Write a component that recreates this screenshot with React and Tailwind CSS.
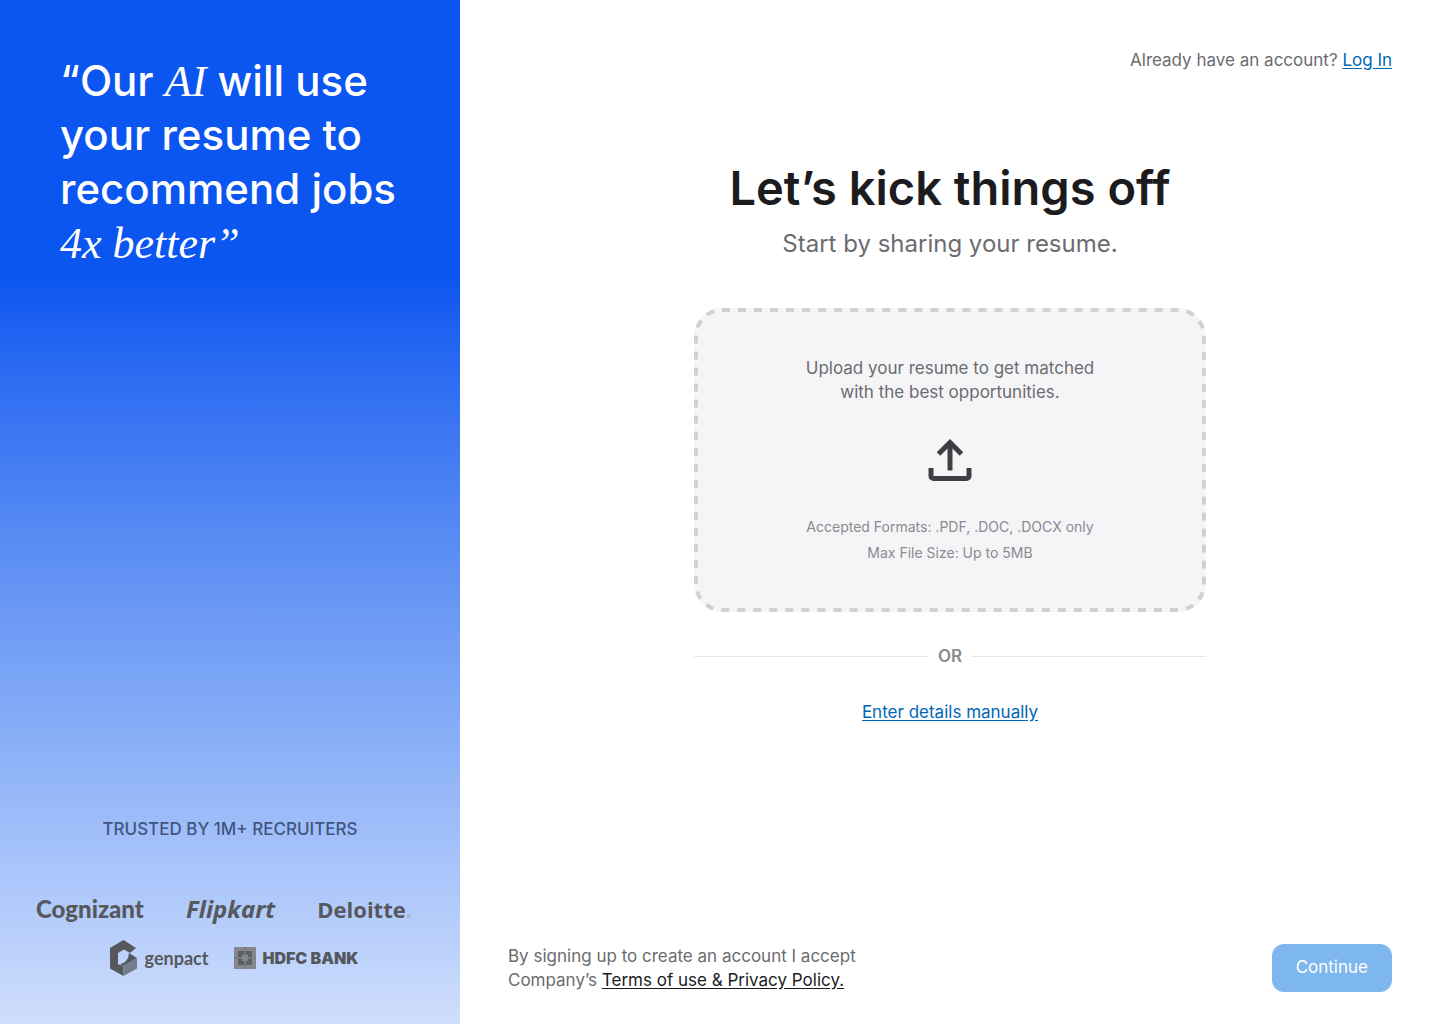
function UploadIcon() {
  return (
    <svg viewBox="0 0 44 44" className="h-11 w-11" fill="none" stroke="#3f3f43" strokeWidth="5" aria-hidden="true">
      <path d="M22 32.500V4" />
      <path d="M10.500 16 22 4.500 33.500 16" />
      <path d="M3 30v8a2.500 2.500 0 0 0 2.500 2.500h33a2.500 2.500 0 0 0 2.500-2.500v-8" />
    </svg>
  );
}

function GenpactMark() {
  return (
    <svg viewBox="0 0 27 36" className="h-9 w-[27px]" aria-hidden="true">
      <path d="M13.5 0 26 8l-6 5-6-3.500L8 13v11l5.500 2.500V36L0 28.500V8Z" fill="#55585c" />
      <path d="m19 13 8 5-13.500 8.500-3.500-2 5-2.500 3-4Z" fill="#55585c" />
      <path d="M13.500 25 27 18v10.500L13.500 36Z" fill="#737d8c" />
    </svg>
  );
}

function HdfcMark() {
  return (
    <svg viewBox="0 0 22 22" className="h-[22px] w-[22px]" aria-hidden="true">
      <path d="M0 0h22v22H0Z" fill="#84888e" />
      <path d="M4 4h14v14H4Z" fill="#5c5f64" />
      <path d="M8 8h6v6H8Z" fill="#84888e" />
      <path d="M11 4v14M4 11h14" stroke="#84888e" strokeWidth="1.500" />
      <path d="M11 0v5M11 17v5M0 11h5M17 11h5" stroke="#6f7378" />
    </svg>
  );
}

export default function App() {
  return (
    <div className="flex min-h-screen bg-white font-['Inter',sans-serif] text-[#6b6b70]">
      <aside className="flex w-[460px] shrink-0 flex-col justify-between bg-linear-to-b from-[#0b55f0] from-27% via-[#6b99f4] via-60% to-[#cfdefc] px-9 pt-[54px] pb-12">
        <h2 className="pl-6 text-[42px] leading-[54px] font-medium text-white">
          “Our <em className="font-['Liberation_Serif',serif] text-[44px] leading-none">AI</em> will use
          <br />
          your resume to
          <br />
          recommend jobs
          <br />
          <em className="font-['Liberation_Serif',serif] text-[44px] leading-none">4x better”</em>
        </h2>

        <div className="text-[#55585c]">
          <p className="text-center text-[17px] leading-6 font-medium text-[#40557f]">TRUSTED BY 1M+ RECRUITERS</p>
          <div className="mt-[54px] flex items-center justify-between pr-3 leading-7">
            <span className="font-['Lato',sans-serif] text-[24px] font-black">Cognizant</span>
            <span className="font-['Noto_Sans',sans-serif] text-[24px] font-bold italic">Flipkart</span>
            <span className="font-['Open_Sans',sans-serif] text-[22px] font-bold">
              Deloitte<span className="text-[#a9b4c8]">.</span>
            </span>
          </div>
          <div className="mt-[17px] flex items-center justify-center gap-[26px] pl-2">
            <span className="flex items-center gap-2 font-['Lato',sans-serif] text-[18px] font-bold">
              <GenpactMark />
              genpact
            </span>
            <span className="flex items-center gap-1.5 text-[16px] font-black">
              <HdfcMark />
              HDFC BANK
            </span>
          </div>
        </div>
      </aside>

      <main className="flex flex-1 flex-col px-12 pt-12 pb-8">
        <p className="text-right text-[17px] leading-6">
          Already have an account?{" "}
          <a href="#login" className="text-[#0067b8] underline underline-offset-2">
            Log In
          </a>
        </p>

        <section className="mx-auto mt-[84px] flex w-full max-w-lg flex-col items-center text-center">
          <h1 className="text-[47px] leading-[64px] font-semibold whitespace-nowrap text-[#1c1c1e]">Let’s kick things off</h1>
          <p className="mt-2 text-[24px] leading-8">Start by sharing your resume.</p>

          <button
            type="button"
            className="relative mt-12 flex w-full flex-col items-center rounded-[28px] bg-[#f5f5f8] px-8 pt-12 pb-[46px]"
          >
            <svg className="absolute inset-0 h-full w-full" fill="none" aria-hidden="true">
              <rect
                x="2"
                y="2"
                rx="26"
                pathLength="1568"
                strokeDasharray="8 8"
                stroke="#d1d1d4"
                strokeWidth="4"
                className="h-[calc(100%-4px)] w-[calc(100%-4px)]"
              />
            </svg>
            <span className="text-[17px] leading-6">
              Upload your resume to get matched
              <br />
              with the best opportunities.
            </span>
            <span className="mt-[34px] mb-8">
              <UploadIcon />
            </span>
            <span className="text-[14px] leading-[26px] text-[#8a8a8f]">
              Accepted Formats: .PDF, .DOC, .DOCX only
              <br />
              Max File Size: Up to 5MB
            </span>
          </button>

          <div className="mt-8 flex w-full items-center gap-2.5 text-[17px] leading-6 font-semibold text-[#8a8a8f]">
            <span className="h-px flex-1 bg-[#e5e5e8]" />
            OR
            <span className="h-px flex-1 bg-[#e5e5e8]" />
          </div>
          <a href="#manual" className="mt-8 text-[17px] leading-6 text-[#0067b8] underline underline-offset-2">
            Enter details manually
          </a>
        </section>

        <footer className="mt-auto flex items-center justify-between">
          <p className="text-[17px] leading-6">
            By signing up to create an account I accept
            <br />
            Company’s{" "}
            <a href="#terms" className="text-[#1c1c1e] underline underline-offset-2">
              Terms of use &amp; Privacy Policy.
            </a>
          </p>
          <button type="button" className="h-12 rounded-xl bg-[#7eb6ee] px-6 text-[17px] text-white">
            Continue
          </button>
        </footer>
      </main>
    </div>
  );
}
